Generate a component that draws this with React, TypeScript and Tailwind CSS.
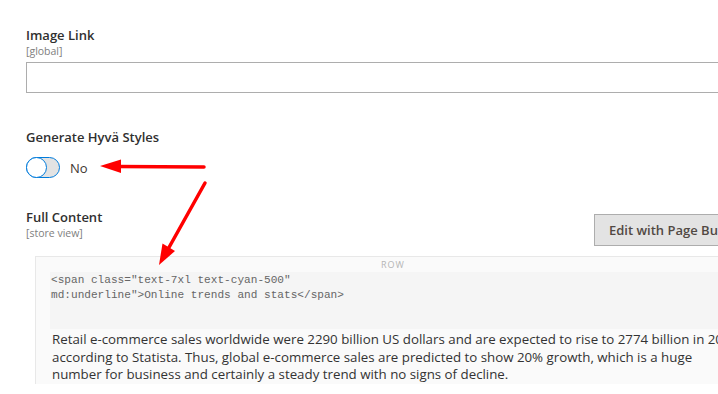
import React from "react";

export default function App() {
  return (
    <div
      className="relative w-[718px] h-[394px] overflow-hidden bg-white"
      style={{ fontFamily: '"Open Sans", "Liberation Sans", sans-serif' }}
    >
      <div className="pl-[26px] pt-[25px]">
        {/* Image Link */}
        <div className="text-[13px] leading-[20px] font-semibold text-[#303030]">Image Link</div>
        <div className="text-[10.5px] leading-[13px] text-[#808080]">[global]</div>
        <div className="mt-[4px] h-[31px] w-[720px] border border-[#adadad] bg-white" />

        {/* Generate Hyva Styles */}
        <div className="mt-[34px] text-[13px] leading-[20px] font-semibold text-[#303030]">Generate Hyvä Styles</div>
        <div className="mt-[10px] flex items-center gap-[10px]">
          <div className="relative h-[21px] w-[34px] rounded-full border border-[#007bdb] bg-[#e3e3e3]">
            <div className="absolute left-[-1px] top-[-1px] h-[21px] w-[21px] rounded-full border border-[#007bdb] bg-white" />
          </div>
          <div className="text-[13px] leading-[20px] text-[#41362f]">No</div>
        </div>

        {/* Full Content */}
        <div className="mt-[29px] flex w-[800px]">
          <div className="w-[568px] shrink-0">
            <div className="text-[13px] leading-[20px] font-semibold text-[#303030]">Full Content</div>
            <div className="text-[10.5px] leading-[13px] text-[#808080]">[store view]</div>
          </div>
          <div className="mt-[7px] h-[32px] shrink-0 whitespace-nowrap border border-[#adadad] bg-[#e3e3e3] pl-[14px] pr-[14px] text-[13px] leading-[30px] font-semibold text-[#514943]">
            Edit with Page Builder
          </div>
        </div>

        {/* Page builder row */}
        <div className="ml-[9px] mt-[10px] w-[720px] border-l border-t border-[#e8e8e8] bg-[#fafafa]">
          <div className="h-[15px] pl-[345px] text-[9px] leading-[15px] tracking-[1px] text-[#b5b5b5]">ROW</div>
          <div className="ml-[14px] h-[57px] bg-[#f5f5f5] pl-[1px] pt-[1px]">
            <div
              className="text-[11.1px] leading-[15px] text-[#666666]"
              style={{ fontFamily: '"Liberation Mono", "Courier New", monospace' }}
            >
              &lt;span class="text-7xl text-cyan-500"
              <br />
              md:underline"&gt;Online trends and stats&lt;/span&gt;
            </div>
          </div>
          <div className="ml-[15px] mt-[2px] whitespace-nowrap pl-[1px] text-[13.3px] leading-[17.6px] text-[#333333]">
            Retail e-commerce sales worldwide were 2290 billion US dollars and are expected to rise to 2774 billion in 2018
            <br />
            according to Statista. Thus, global e-commerce sales are predicted to show 20% growth, which is a huge
            <br />
            number for business and certainly a steady trend with no signs of decline.
          </div>
        </div>
      </div>

      {/* Red annotation arrows */}
      <svg className="pointer-events-none absolute left-0 top-0" width="718" height="394" viewBox="0 0 718 394">
        <line x1="204" y1="167" x2="117" y2="166.5" stroke="#ff0000" strokeWidth="3.5" strokeLinecap="round" />
        <polygon points="100,166 121,159.5 121,173" fill="#ff0000" />
        <line x1="205" y1="183" x2="167" y2="251" stroke="#ff0000" strokeWidth="3.5" strokeLinecap="round" />
        <polygon points="159,265 162.5,243.5 175,251" fill="#ff0000" />
      </svg>
    </div>
  );
}
